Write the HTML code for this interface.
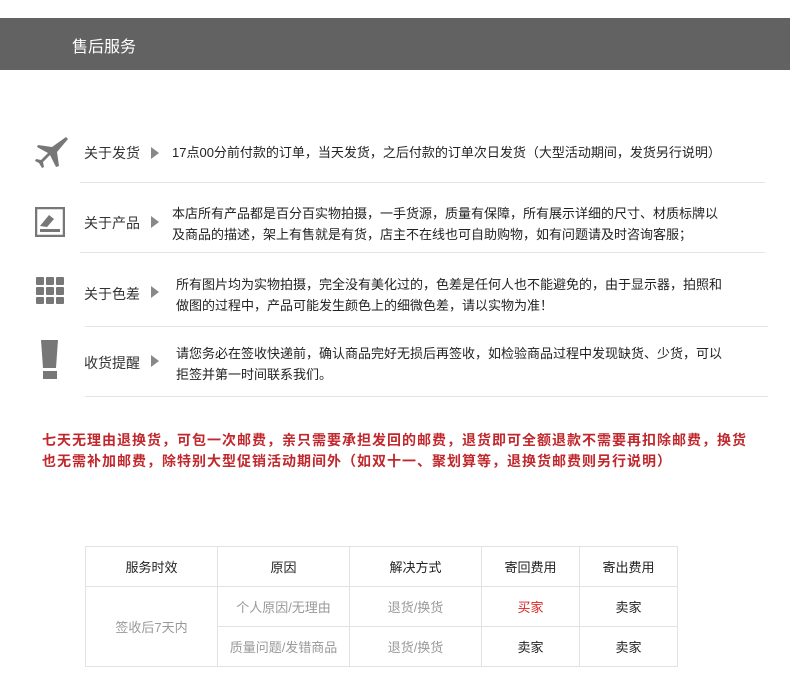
<!DOCTYPE html>
<html><head><meta charset="utf-8"><style>
body{margin:0;width:790px;height:698px;background:#fff;font-family:"Liberation Sans","Noto Sans CJK SC",sans-serif;position:relative;overflow:hidden}
.a{position:absolute}
.hdr{left:0;top:18px;width:790px;height:52px;background:#626262}
.hdr span{position:absolute;left:72px;top:15px;color:#fff;font-size:16px}
.lab{font-size:14px;color:#333}
.tri{width:0;height:0;border-left:8px solid #888;border-top:6px solid transparent;border-bottom:6px solid transparent}
.txt{font-size:13px;color:#222;line-height:21px}
.ln{height:1px;background:#e4e4e4}
.red{left:42px;top:430px;font-size:14px;font-weight:bold;color:#c0282d;line-height:21px;letter-spacing:1px}
table{position:absolute;left:85px;top:546px;border-collapse:collapse;font-size:13px}
td{border:1px solid #e2e2e2;text-align:center;height:39px;color:#222;padding:0}
.g{color:#999}
</style></head><body>
<div class="a hdr"><span>售后服务</span></div>

<svg class="a" style="left:35px;top:136px" width="34" height="34" viewBox="0 0 34 34"><path d="M31 1 L33 3 L22 16 L24 30 L21 31 L15 19 L8 26 L9 31 L7 32 L4 27 L0 25 L1 23 L6 24 L13 17 L2 11 L3 9 L17 11 Z" fill="#777"/></svg>
<div class="a lab" style="left:84px;top:143px">关于发货</div>
<div class="a tri" style="left:151px;top:147px"></div>
<div class="a txt" style="left:172px;top:142px">17点00分前付款的订单，当天发货，之后付款的订单次日发货（大型活动期间，发货另行说明）</div>
<div class="a ln" style="left:80px;top:182px;width:685px"></div>

<svg class="a" style="left:35px;top:207px" width="30" height="30" viewBox="0 0 30 30"><rect x="1" y="1" width="28" height="28" fill="none" stroke="#777" stroke-width="2.5"/><path d="M5 19 L14 8 L19 12 L12 20 Z" fill="#777"/><rect x="5" y="22" width="20" height="3" fill="#777"/></svg>
<div class="a lab" style="left:84px;top:213px">关于产品</div>
<div class="a tri" style="left:151px;top:216px"></div>
<div class="a txt" style="left:172px;top:203px">本店所有产品都是百分百实物拍摄，一手货源，质量有保障，所有展示详细的尺寸、材质标牌以<br>及商品的描述，架上有售就是有货，店主不在线也可自助购物，如有问题请及时咨询客服；</div>
<div class="a ln" style="left:80px;top:252px;width:685px"></div>

<svg class="a" style="left:36px;top:277px" width="29" height="28" viewBox="0 0 29 28"><g fill="#777"><rect x="0" y="0" width="8" height="8" rx="1"/><rect x="10" y="0" width="8" height="8" rx="1"/><rect x="20" y="0" width="8" height="8" rx="1"/><rect x="0" y="10" width="8" height="8" rx="1"/><rect x="10" y="10" width="8" height="8" rx="1"/><rect x="20" y="10" width="8" height="8" rx="1"/><rect x="0" y="20" width="8" height="7" rx="1"/><rect x="10" y="20" width="8" height="7" rx="1"/><rect x="20" y="20" width="8" height="7" rx="1"/></g></svg>
<div class="a lab" style="left:84px;top:284px">关于色差</div>
<div class="a tri" style="left:151px;top:286px"></div>
<div class="a txt" style="left:176px;top:274px">所有图片均为实物拍摄，完全没有美化过的，色差是任何人也不能避免的，由于显示器，拍照和<br>做图的过程中，产品可能发生颜色上的细微色差，请以实物为准！</div>
<div class="a ln" style="left:85px;top:326px;width:683px"></div>

<svg class="a" style="left:40px;top:340px" width="20" height="40" viewBox="0 0 20 40"><path d="M1 0 H18 L16 28 H3 Z" fill="#777"/><rect x="3" y="31" width="14" height="8" fill="#777"/></svg>
<div class="a lab" style="left:84px;top:353px">收货提醒</div>
<div class="a tri" style="left:151px;top:355px"></div>
<div class="a txt" style="left:176px;top:343px">请您务必在签收快递前，确认商品完好无损后再签收，如检验商品过程中发现缺货、少货，可以<br>拒签并第一时间联系我们。</div>
<div class="a ln" style="left:85px;top:396px;width:683px"></div>

<div class="a red">七天无理由退换货，可包一次邮费，亲只需要承担发回的邮费，退货即可全额退款不需要再扣除邮费，换货<br>也无需补加邮费，除特别大型促销活动期间外（如双十一、聚划算等，退换货邮费则另行说明）</div>

<table>
<tr><td style="width:131px">服务时效</td><td style="width:131px">原因</td><td style="width:131px">解决方式</td><td style="width:97px">寄回费用</td><td style="width:97px">寄出费用</td></tr>
<tr><td rowspan="2" class="g">签收后7天内</td><td class="g">个人原因/无理由</td><td class="g">退货/换货</td><td style="color:#d22">买家</td><td>卖家</td></tr>
<tr><td class="g">质量问题/发错商品</td><td class="g">退货/换货</td><td>卖家</td><td>卖家</td></tr>
</table>
</body></html>
